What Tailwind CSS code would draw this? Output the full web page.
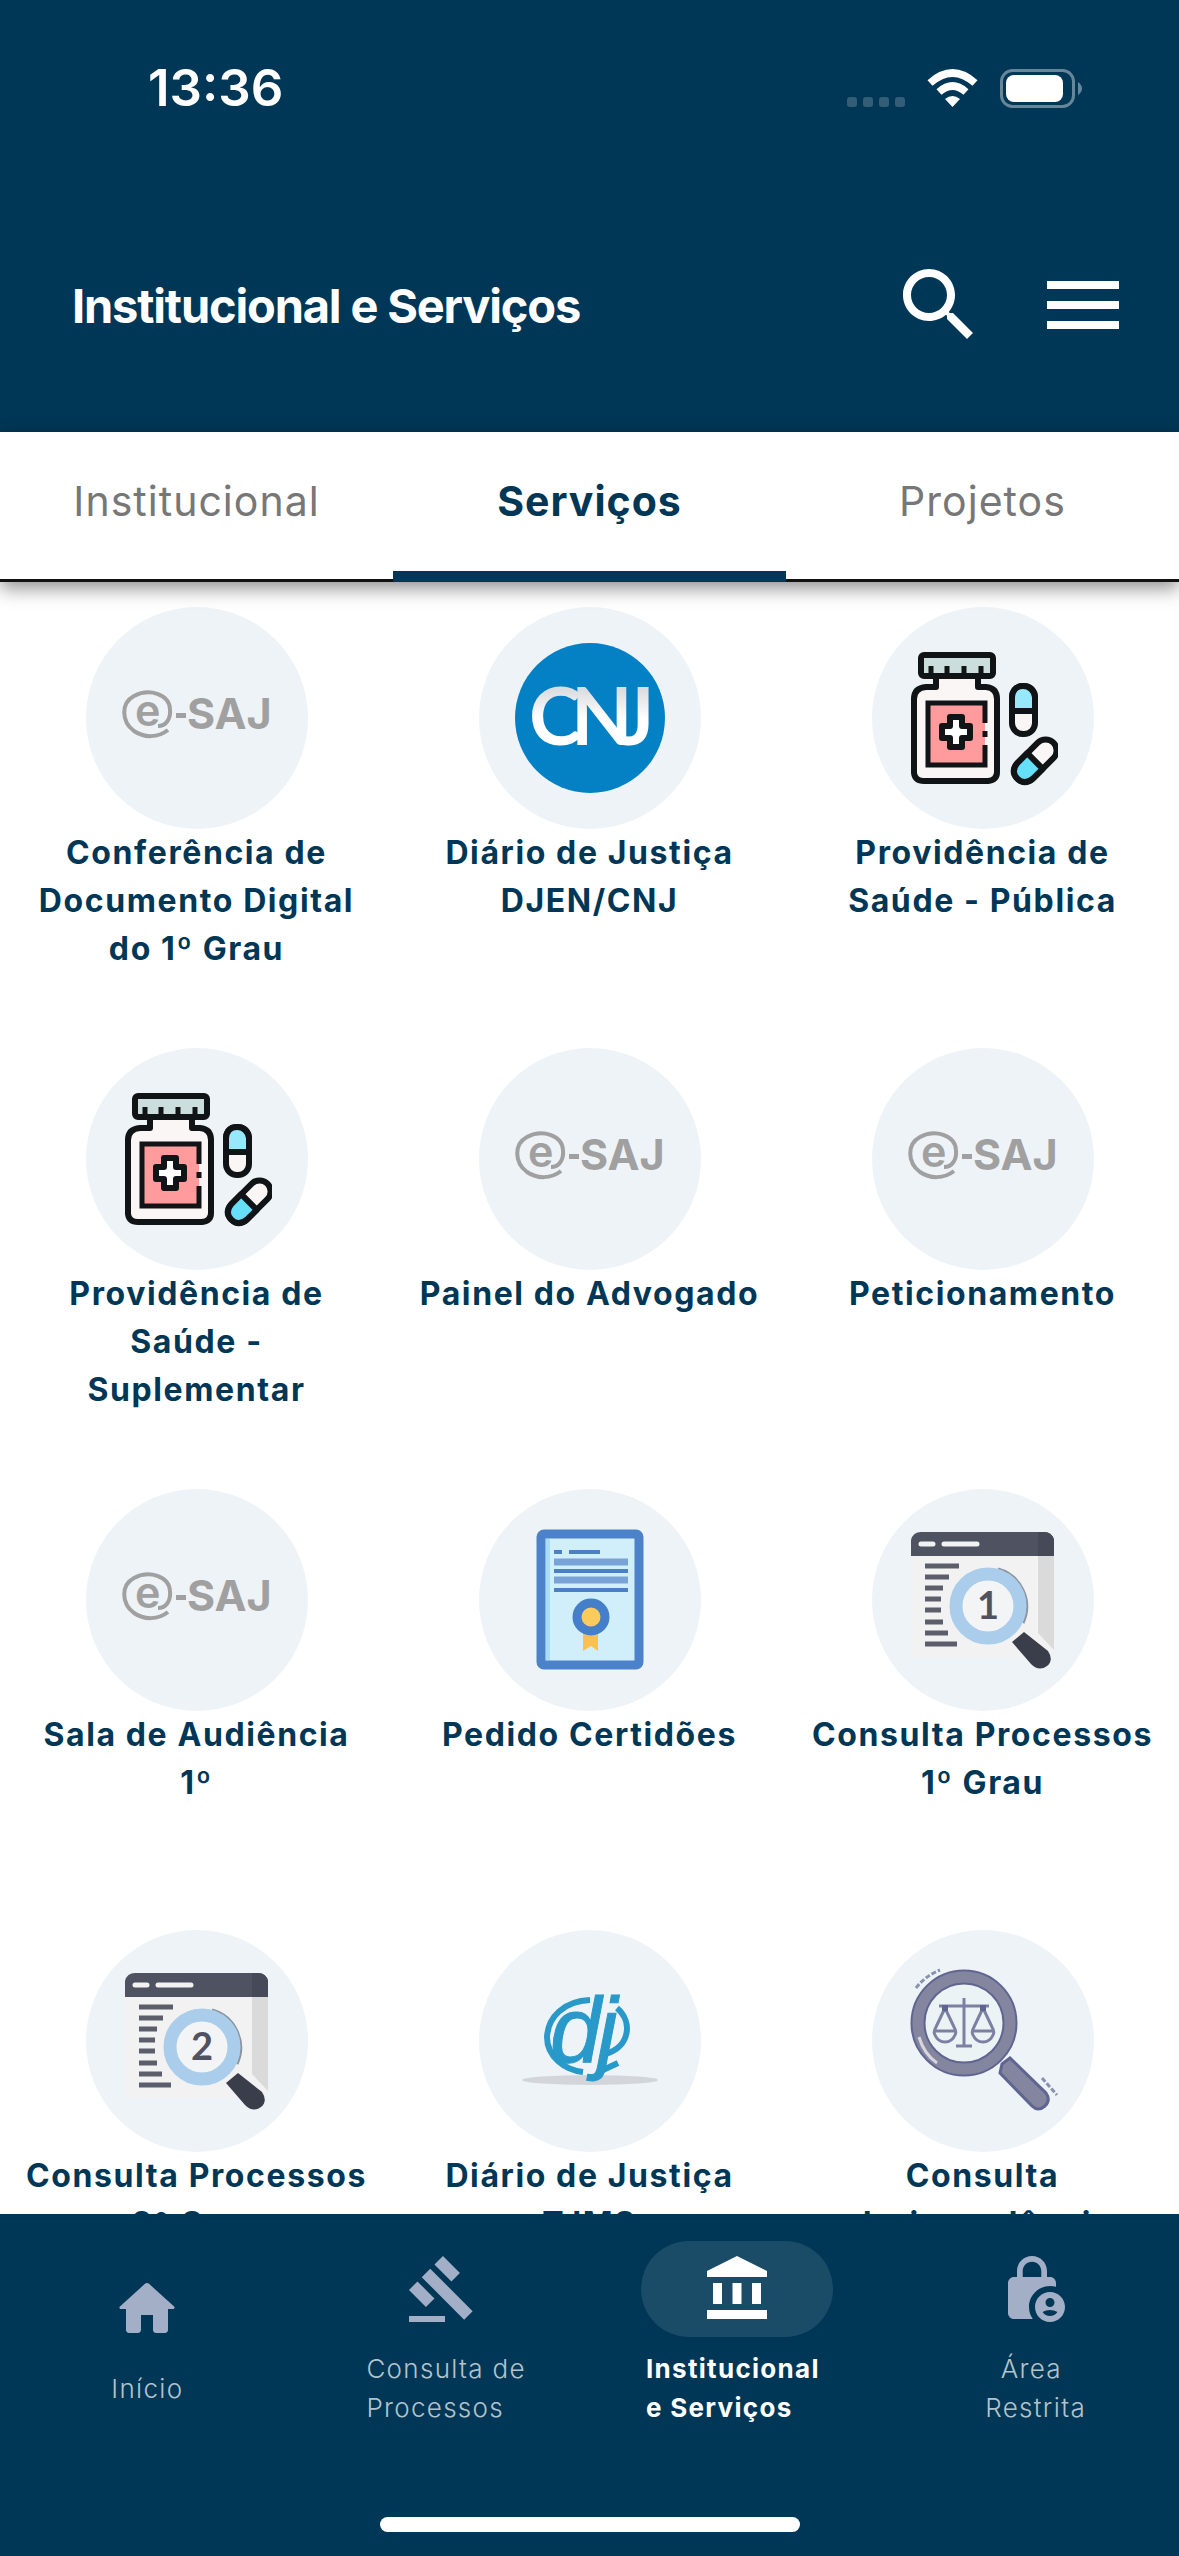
<!DOCTYPE html>
<html lang="pt-BR">
<head>
<meta charset="utf-8">
<meta name="viewport" content="width=device-width, initial-scale=1">
<title>Institucional e Serviços</title>
<script src="https://cdn.jsdelivr.net/npm/@tailwindcss/browser@4"></script>
</head>
<body class="flex h-screen flex-col overflow-hidden bg-white font-['Inter',sans-serif] text-[#003756]">

<!-- Gradients must stay rendered, so they live outside the hidden symbol sheet -->
<svg class="absolute size-0" aria-hidden="true">
  <linearGradient id="silver" x1="0" y1="0" x2="0" y2="1"><stop offset="0.25" stop-color="#dcdde0"/><stop offset="0.55" stop-color="#ffffff"/></linearGradient>
</svg>

<!-- Icon definitions -->
<svg class="hidden" aria-hidden="true">
  <symbol id="esaj" viewBox="0 0 150 150">
    <g fill="#a0a0a0" font-family="Inter, sans-serif">
      <path d="M46 87C36 95 22 95 12 88C-1 78 -1 60 12 53C27 45 47 51 48 66C49 76 44 83 36 83" fill="none" stroke="#a0a0a0" stroke-width="4"/>
      <text x="13" y="83" font-size="43" font-weight="600" letter-spacing="0">e</text>
      <rect x="54" y="70" width="10" height="5"/>
      <text x="65" y="86" font-size="43" font-weight="700" letter-spacing="0">SAJ</text>
    </g>
  </symbol>
  <symbol id="cnj" viewBox="0 0 150 150">
    <circle cx="75" cy="75" r="75" fill="#0381c4"/>
    <g fill="url(#silver)" font-family="Lato, sans-serif" font-weight="700" font-size="80">
      <text x="14" y="102">C</text><text x="56" y="102">N</text><text x="105" y="102">J</text>
    </g>
  </symbol>
  <symbol id="meds" viewBox="0 0 150 150">
    <g stroke="#111416" stroke-width="6" stroke-linejoin="round">
      <path d="M28 32 V44 H18 Q6 45 6 56 V130 Q7 138 16 138 H80 Q89 137 89 129 V56 Q89 45 78 44 H70 V32Z" fill="#faf6f5"/>
      <rect x="13" y="12" width="72" height="21" rx="3" fill="#cbdedd"/>
      <path d="M23 23V32M39 23V32M56 23V32M73 23V32" fill="none" stroke-width="5"/>
      <path d="M77 80V60H20V122H77V102M77 88V94" fill="#ff9b9c" stroke-linejoin="miter" stroke-width="5"/>
      <path d="M42 74H54V83H62V95H54V104H42V95H34V83H42Z" fill="#fff"/>
      <rect x="104" y="43" width="23" height="48" rx="11" fill="#faf6f5"/>
      <path d="M104 68V54Q105 43 115 43T127 54V68Z" fill="#97e8fb"/>
      <g transform="rotate(-45 127 118)">
        <rect x="102" y="107" width="51" height="22" rx="11" fill="#faf6f5"/>
        <path d="M127 107H113Q102 108 102 118T113 129H127Z" fill="#66dffb"/>
      </g>
    </g>
  </symbol>
  <symbol id="cert" viewBox="0 0 150 150">
    <rect x="26" y="9" width="98" height="131" rx="3" fill="#d1eefb" stroke="#4c82c9" stroke-width="9"/>
    <path d="M33 14V135" stroke="#a9dcf6" stroke-width="4"/>
    <path d="M39 27H47M54 27H85M39 46H113M39 65H113" stroke="#4c80c6" stroke-width="4"/>
    <path d="M39 37H113M39 55H113" stroke="#79a3d7" stroke-width="7"/>
    <path d="M68 105H83V126L76 121L68 126Z" fill="#fbc04f"/>
    <circle cx="76" cy="92" r="14" fill="#fccb5c" stroke="#457fca" stroke-width="9"/>
  </symbol>
  <symbol id="window" viewBox="0 0 150 150">
    <path d="M3 30H146V127Q145 132 140 132H8Q3 132 3 127Z" fill="#f2f2f2"/>
    <path d="M130 30H146V125L130 108Z" fill="#dadada"/>
    <path d="M3 31V15Q5 7 13 7H136Q144 7 146 15V31Z" fill="#4f5260"/>
    <path d="M130 7H136Q144 7 146 15V31H130Z" fill="#464957"/>
    <path d="M13 19H25M36 19H69" stroke="#f2f2f2" stroke-width="5" stroke-linecap="round"/>
    <path d="M17 41H51M17 52H41M17 63H35M17 74H33M17 85H33M17 97H35M17 108H40M17 119H49" stroke="#5c5e6b" stroke-width="5"/>
    <path d="M90 44A39 39 0 0 1 115 98" fill="none" stroke="#8b949f" stroke-width="3"/>
    <circle cx="80" cy="81" r="32" fill="#f3f4f5" stroke="#a9cdea" stroke-width="13"/>
    <path d="M104 117L116 107L140 126Q146 135 139 141Q131 147 123 139Z" fill="#3a3d4a"/>
  </symbol>
  <symbol id="dj" viewBox="0 0 150 150">
    <ellipse cx="75" cy="114" rx="68" ry="5" fill="#d2d6da"/>
    <g fill="none" stroke="#2899c9" stroke-width="6">
      <path d="M75 34C49 35 33 51 32 71C32 91 50 104 68 106"/>
      <path d="M102 42C118 56 115 80 91 88M88 104L103 97"/>
    </g>
    <g fill="#2899c9" stroke="#2899c9" font-family="'Liberation Sans', sans-serif" font-style="italic" font-weight="400" font-size="92">
      <text x="35" y="96">d</text><text x="82" y="96">j</text>
    </g>
  </symbol>
  <symbol id="scales" viewBox="0 0 150 150">
    <path d="M94 98L102 92L138 127Q143 134 137 140Q130 146 124 140L92 107Z" fill="#84869f" stroke="#5f6590" stroke-width="3"/>
    <circle cx="56" cy="57" r="46" fill="#ecf3f5" stroke="#5f6590" stroke-width="15"/>
    <circle cx="56" cy="57" r="46" fill="none" stroke="#84869f" stroke-width="11"/>
    <g fill="none" stroke="#7c80a3" stroke-width="3">
      <path d="M56 32V80M48 80H64M31 40H81M37 42L28 61Q25 66 27 69Q30 76 37 76T47 69Q49 66 46 61ZM26 65H48M75 42L66 61Q63 66 65 69Q68 76 75 76T85 69Q87 66 84 61ZM64 65H86"/>
    </g>
    <path d="M34 42H40M72 42H78" stroke="#5f6590" stroke-width="6"/>
    <path d="M11 71Q16 88 29 97" fill="none" stroke="#d9d5dc" stroke-width="3"/>
    <path d="M8 22Q17 10 32 4M134 112L149 129" fill="none" stroke="#8b90b0" stroke-width="3" stroke-dasharray="5 2"/>
  </symbol>
</svg>

<header class="shrink-0 bg-[#003756] text-white">
  <div class="flex h-[177px] items-center justify-between pr-[97px] pl-[148px]">
    <time class="text-[51px] font-semibold">13:36</time>
    <div class="flex items-center gap-[22px]">
      <svg class="h-10 w-[58px]" viewBox="0 0 58 40" fill="#345e78" aria-hidden="true"><rect y="28" width="10" height="10" rx="3"/><rect x="16" y="28" width="10" height="10" rx="3"/><rect x="32" y="28" width="10" height="10" rx="3"/><rect x="48" y="28" width="10" height="10" rx="3"/></svg>
      <svg class="h-10 w-[51px]" viewBox="0 0 51 40" aria-hidden="true"><path d="M3 14Q25.500 -6 48 14M12 23Q25.500 11 39 23" fill="none" stroke="#fff" stroke-width="7.500"/><path d="M18 30Q25.500 24 33 30L25.500 38Z" fill="#fff"/></svg>
      <svg class="h-10 w-[82px]" viewBox="0 0 82 40" aria-hidden="true"><rect x="1.500" y="1.500" width="72" height="36" rx="11" fill="none" stroke="#66879a" stroke-width="3"/><rect x="6" y="6" width="57" height="27" rx="8" fill="#fff"/><path d="M78 13Q82 16 82 19.500T78 26Z" fill="#66879a"/></svg>
    </div>
  </div>
  <div class="flex h-[255px] items-center justify-between pr-12 pl-[72px]">
    <h1 class="pt-1 text-[47px] font-bold tracking-tight">Institucional e Serviços</h1>
    <div class="flex gap-12">
      <button type="button" aria-label="Pesquisar"><svg class="size-24" viewBox="0 0 24 24" fill="currentColor"><path d="M15.500 14h-.79l-.28-.27C15.410 12.590 16 11.110 16 9.500 16 5.910 13.090 3 9.500 3S3 5.910 3 9.500 5.910 16 9.500 16c1.610 0 3.090-.59 4.230-1.570l.27.28v.79l5 4.990L20.490 19l-4.990-5zm-6 0C7.010 14 5 11.990 5 9.500S7.010 5 9.500 5 14 7.010 14 9.500 11.990 14 9.500 14z"/></svg></button>
      <button type="button" aria-label="Menu"><svg class="size-24" viewBox="0 0 24 24" fill="currentColor"><path d="M3 18h18v-2H3v2zm0-5h18v-2H3v2zm0-7v2h18V6H3z"/></svg></button>
    </div>
  </div>
</header>

<nav aria-label="Categorias" class="relative z-10 grid h-[150px] shrink-0 grid-cols-3 bg-white text-[41px] shadow-[0_6px_18px_rgba(0,0,0,0.45)]">
  <a href="#institucional" class="flex items-center justify-center border-b-3 border-[#111] pb-2 tracking-wide text-[#777]">Institucional</a>
  <a href="#servicos" aria-current="page" class="flex items-center justify-center border-b-11 border-[#003756] font-bold tracking-wide">Serviços</a>
  <a href="#projetos" class="flex items-center justify-center border-b-3 border-[#111] pb-2 tracking-wide text-[#777]">Projetos</a>
</nav>

<main id="servicos" class="grid min-h-0 flex-1 auto-rows-[441px] grid-cols-3 overflow-y-auto pt-[25px] text-center text-[32px] leading-[48px] font-bold tracking-wider [scrollbar-width:none]">
  <a href="#conferencia" class="flex flex-col items-center px-5"><span class="flex size-[222px] shrink-0 items-center justify-center rounded-full bg-[#eef3f8]"><svg class="size-[150px]"><use href="#esaj"/></svg></span><span>Conferência de Documento Digital<br>do 1º Grau</span></a>
  <a href="#djen" class="flex flex-col items-center px-5"><span class="flex size-[222px] shrink-0 items-center justify-center rounded-full bg-[#eef3f8]"><svg class="size-[150px]"><use href="#cnj"/></svg></span><span>Diário de Justiça DJEN/CNJ</span></a>
  <a href="#saude-publica" class="flex flex-col items-center px-5"><span class="flex size-[222px] shrink-0 items-center justify-center rounded-full bg-[#eef3f8]"><svg class="size-[150px]"><use href="#meds"/></svg></span><span>Providência de Saúde - Pública</span></a>
  <a href="#saude-suplementar" class="flex flex-col items-center px-5"><span class="flex size-[222px] shrink-0 items-center justify-center rounded-full bg-[#eef3f8]"><svg class="size-[150px]"><use href="#meds"/></svg></span><span>Providência de<br>Saúde -<br>Suplementar</span></a>
  <a href="#painel" class="flex flex-col items-center px-5"><span class="flex size-[222px] shrink-0 items-center justify-center rounded-full bg-[#eef3f8]"><svg class="size-[150px]"><use href="#esaj"/></svg></span><span>Painel do Advogado</span></a>
  <a href="#peticionamento" class="flex flex-col items-center px-5"><span class="flex size-[222px] shrink-0 items-center justify-center rounded-full bg-[#eef3f8]"><svg class="size-[150px]"><use href="#esaj"/></svg></span><span>Peticionamento</span></a>
  <a href="#audiencia" class="flex flex-col items-center px-5"><span class="flex size-[222px] shrink-0 items-center justify-center rounded-full bg-[#eef3f8]"><svg class="size-[150px]"><use href="#esaj"/></svg></span><span>Sala de Audiência<br>1º</span></a>
  <a href="#certidoes" class="flex flex-col items-center px-5"><span class="flex size-[222px] shrink-0 items-center justify-center rounded-full bg-[#eef3f8]"><svg class="size-[150px]"><use href="#cert"/></svg></span><span>Pedido Certidões</span></a>
  <a href="#grau-1" class="flex flex-col items-center px-5"><span class="flex size-[222px] shrink-0 items-center justify-center rounded-full bg-[#eef3f8]"><svg class="size-[150px]" viewBox="0 0 150 150"><use href="#window"/><text x="80" y="94" text-anchor="middle" font-size="38" font-weight="700" letter-spacing="0" fill="#4f5260" font-family="Lato, sans-serif">1</text></svg></span><span>Consulta Processos 1º Grau</span></a>
  <a href="#grau-2" class="flex flex-col items-center px-5"><span class="flex size-[222px] shrink-0 items-center justify-center rounded-full bg-[#eef3f8]"><svg class="size-[150px]" viewBox="0 0 150 150"><use href="#window"/><text x="80" y="94" text-anchor="middle" font-size="38" font-weight="700" letter-spacing="0" fill="#4f5260" font-family="Lato, sans-serif">2</text></svg></span><span>Consulta Processos 2º Grau</span></a>
  <a href="#djms" class="flex flex-col items-center px-5"><span class="flex size-[222px] shrink-0 items-center justify-center rounded-full bg-[#eef3f8]"><svg class="size-[150px]"><use href="#dj"/></svg></span><span>Diário de Justiça TJMS</span></a>
  <a href="#jurisprudencia" class="flex flex-col items-center px-5"><span class="flex size-[222px] shrink-0 items-center justify-center rounded-full bg-[#eef3f8]"><svg class="size-[150px]"><use href="#scales"/></svg></span><span>Consulta Jurisprudência</span></a>
</main>

<footer class="flex shrink-0 flex-col items-center bg-[#003756] pt-[27px] pb-6">
  <nav aria-label="Principal" class="grid w-full grid-cols-4 items-center text-[26px] leading-[39px] tracking-wider text-[#b3c3cd]">
    <a href="#inicio" class="flex flex-col items-center gap-3"><span class="flex h-24 w-48 items-center justify-center text-[#a2afc7]"><svg class="size-[72px]" viewBox="0 0 24 24" fill="currentColor"><path d="M10 19v-5h4v5c0 .55.45 1 1 1h3c.55 0 1-.45 1-1v-7h1.700c.46 0 .68-.57.33-.87L12.670 3.600c-.38-.34-.96-.34-1.340 0l-8.360 7.530c-.34.3-.13.87.33.87H5v7c0 .55.45 1 1 1h3c.55 0 1-.45 1-1z"/></svg></span><span class="font-light">Início</span></a>
    <a href="#processos" class="flex flex-col items-center gap-3"><span class="flex h-24 w-48 items-center justify-center text-[#a2afc7]"><svg class="size-[72px]" viewBox="0 0 24 24" fill="currentColor"><path d="M1 21h12v2H1zM5.245 8.070l2.830-2.827 14.140 14.142-2.828 2.828zM12.317 1l5.657 5.656-2.830 2.830-5.654-5.660zM3.825 9.485l5.657 5.657-2.828 2.828-5.657-5.657z"/></svg></span><span class="pl-2 font-light">Consulta de<br>Processos</span></a>
    <a href="#servicos" aria-current="page" class="flex flex-col items-center gap-3 font-bold text-white"><span class="flex h-24 w-48 items-center justify-center rounded-full bg-[#1b4c67]"><svg class="size-[72px]" viewBox="0 0 24 24" fill="currentColor"><path d="M2 6L12 1L22 6V8H2zM4 10H7V17H4zM10.500 10H13.500V17H10.500zM17 10H20V17H17zM2 19H22V22H2z"/></svg></span><span class="pr-2">Institucional<br>e Serviços</span></a>
    <a href="#restrita" class="flex flex-col items-center gap-3 text-center"><span class="flex h-24 w-48 items-center justify-center text-[#a2afc7]"><svg class="size-[72px]" viewBox="0 0 24 24" fill="currentColor"><path d="M18 11c.7 0 1.370.1 2 .29V10c0-1.100-.9-2-2-2h-1V6c0-2.760-2.240-5-5-5S7 3.240 7 6v2H6c-1.100 0-2 .9-2 2v10c0 1.100.9 2 2 2h6.260C11.470 20.870 11 19.490 11 18c0-3.870 3.130-7 7-7zM8.900 6c0-1.710 1.390-3.100 3.100-3.100s3.100 1.390 3.100 3.100v2H8.900V6z"/><path d="M18 13c-2.760 0-5 2.240-5 5s2.240 5 5 5 5-2.240 5-5-2.240-5-5-5zm0 2c.83 0 1.500.67 1.500 1.500S18.830 18 18 18s-1.500-.67-1.500-1.500S17.170 15 18 15zm0 6c-1.030 0-1.940-.52-2.480-1.320.73-.42 1.570-.68 2.480-.68s1.750.26 2.480.68c-.54.8-1.450 1.320-2.480 1.320z"/></svg></span><span class="pl-2 font-light">Área&nbsp;<br>Restrita</span></a>
  </nav>
  <div class="mt-[90px] h-[15px] w-[420px] rounded-full bg-white"></div>
</footer>
</body>
</html>
